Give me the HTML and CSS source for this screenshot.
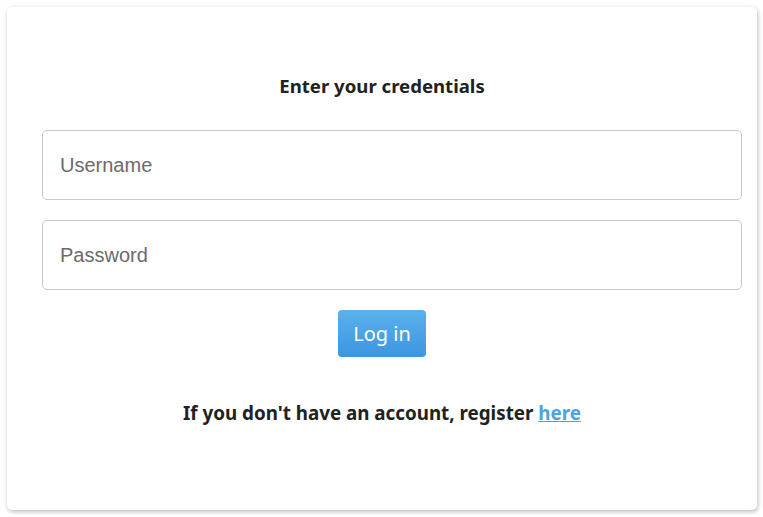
FILE: index.html
```html
<!DOCTYPE html>
<html>
<head>
<meta charset="utf-8">
<link rel="stylesheet" href="styles.css">
</head>
<body>
<div class="card">
  <h2 class="title">Enter your credentials</h2>
  <form class="form">
    <input class="field" type="text" placeholder="Username">
    <input class="field" type="password" placeholder="Password">
    <button class="btn" type="button">Log in</button>
  </form>
  <p class="note">If you don't have an account, register <a href="#" class="link">here</a></p>
</div>
</body>
</html>
```
FILE: styles.css
```css
html, body {
  margin: 0;
  padding: 0;
  background: #ffffff;
}
body {
  padding: 7px 6px 7px 7px;
  font-family: "Noto Sans", "Open Sans", sans-serif;
  color: #212121;
}
.card {
  width: 750px;
  height: 503px;
  box-sizing: border-box;
  background: #fff;
  border-radius: 5px;
  box-shadow: 1px 2px 4px rgba(0,0,0,0.22), 0 0 6px rgba(0,0,0,0.06);
  padding-top: 65px;
  display: flex;
  flex-direction: column;
  align-items: center;
}
.title {
  margin: 0;
  font-size: 18.6px;
  font-weight: 700;
  line-height: 28px;
}
.form {
  width: 100%;
  display: flex;
  flex-direction: column;
  align-items: center;
  margin-top: 30px;
}
.field {
  box-sizing: border-box;
  align-self: flex-start;
  margin-left: 35px;
  width: 700px;
  height: 70px;
  border: 1px solid #c8c8c8;
  border-radius: 5px;
  padding: 0 17px;
  font-family: "Liberation Sans", Arial, sans-serif;
  font-size: 20px;
  color: #333;
  margin-bottom: 20px;
  outline: none;
}
.field::placeholder {
  color: #6b6b6b;
}
.btn {
  width: 88px;
  height: 47px;
  border: none;
  border-radius: 4px;
  background: linear-gradient(#5cb0ec, #3c96e0);
  color: #fff;
  font-family: "Noto Sans", "Open Sans", sans-serif;
  font-size: 20px;
  padding: 0 0 1px;
  cursor: pointer;
}
.note {
  margin: 42px 0 0;
  font-size: 18.8px;
  font-weight: 700;
  line-height: 28px;
}
.link {
  color: #4aa3e6;
  text-decoration: underline;
}
```
